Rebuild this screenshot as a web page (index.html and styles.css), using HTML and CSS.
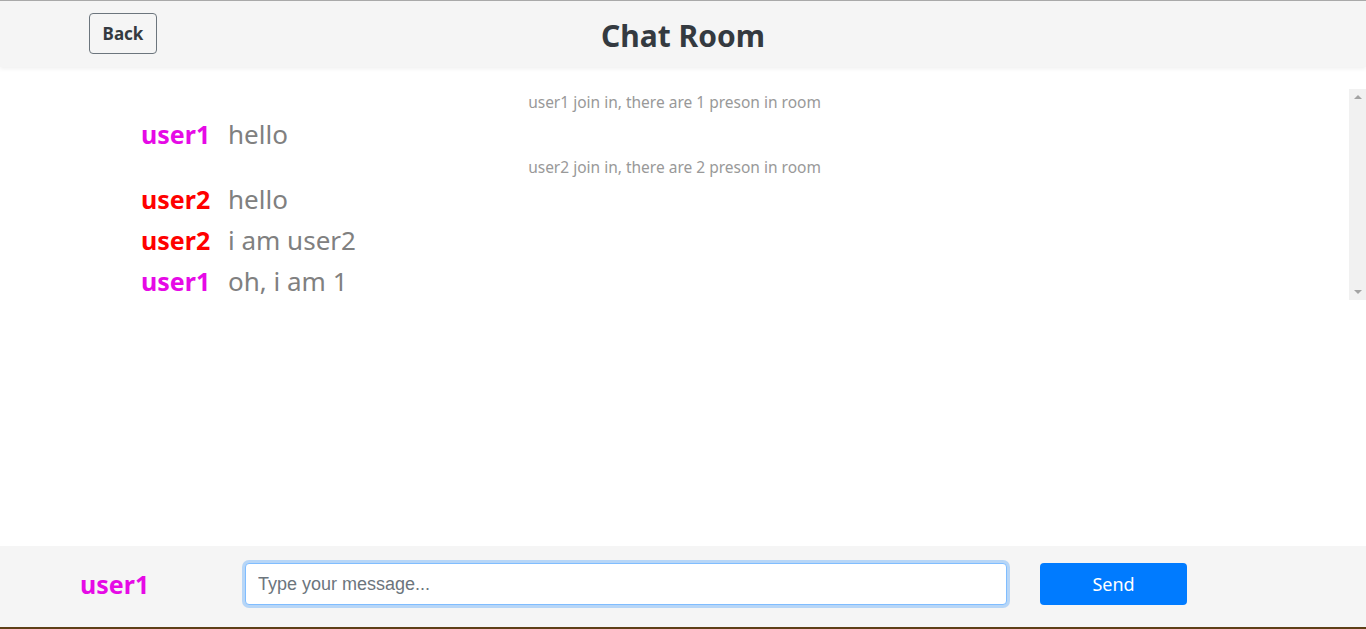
FILE: index.html
```html
<!DOCTYPE html>
<html lang="en">
<head>
    <meta charset="UTF-8">
    <meta name="viewport" content="width=device-width, initial-scale=1.0">
    <title>Chat Room</title>
    <link rel="stylesheet" href="styles.css">
</head>
<body>

<div class="page">
    <header class="top-bar">
        <div class="top-left">
            <button class="back-btn">Back</button>
        </div>
        <h1 class="room-title">Chat Room</h1>
        <div></div>
    </header>

    <main class="chat-area">
        <div class="chat-box">
            <div class="message-list">
                <p class="sys-msg">user1 join in, there are 1 preson in room</p>
                <div class="msg"><span class="msg-user user1">user1</span><span class="msg-text">hello</span></div>
                <p class="sys-msg">user2 join in, there are 2 preson in room</p>
                <div class="msg"><span class="msg-user user2">user2</span><span class="msg-text">hello</span></div>
                <div class="msg"><span class="msg-user user2">user2</span><span class="msg-text">i am user2</span></div>
                <div class="msg"><span class="msg-user user1">user1</span><span class="msg-text">oh, i am 1</span></div>
            </div>
            <!-- scrollbar track (content doesn't overflow yet) -->
            <div class="scroll-track">
                <span class="arrow-up"></span>
                <span class="arrow-down"></span>
            </div>
        </div>
    </main>

    <footer class="composer">
        <div class="me user1">user1</div>
        <input class="msg-input" type="text" placeholder="Type your message..." autofocus>
        <button class="send-btn">Send</button>
    </footer>
</div>

</body>
</html>
```

FILE: styles.css
```css
body {
    font-family: "Noto Sans", "Open Sans", sans-serif;
    margin: 0;
    padding: 0;
    background-color: #fff;
}

.page {
    height: 629px;
    display: flex;
    flex-direction: column;
    border-top: 1px solid #aaa;
    border-bottom: 2px solid #5e3f17;
    box-sizing: border-box;
}

.top-bar {
    display: grid;
    grid-template-columns: 1fr auto 1fr;
    align-items: center;
    height: 66px;
    flex-shrink: 0;
    background-color: #f5f5f5;
    box-shadow: 0 2px 4px rgba(0, 0, 0, 0.06);
    position: relative;
    z-index: 1;
}

.top-left {
    padding-left: 89px;
}

.back-btn {
    font-family: inherit;
    font-size: 17px;
    font-weight: bold;
    color: #343a40;
    background: transparent;
    border: 1px solid #6c757d;
    border-radius: 4px;
    width: 68px;
    height: 41px;
    padding: 0;
    margin-top: -1px;
}

.room-title {
    margin: 0;
    font-size: 30px;
    font-weight: bold;
    color: #343a40;
    padding-top: 2px;
}

.chat-area {
    flex: 1;
    padding-top: 22px;
}

.chat-box {
    display: flex;
    height: 211px;
}

.message-list {
    flex: 1;
    padding-left: 141px;
    padding-top: 1px;
}

.scroll-track {
    width: 17px;
    background-color: #f1f1f1;
    display: flex;
    flex-direction: column;
    justify-content: space-between;
    align-items: center;
    padding: 6px 0;
    box-sizing: border-box;
}

.arrow-up,
.arrow-down {
    width: 0;
    height: 0;
    border-left: 4px solid transparent;
    border-right: 4px solid transparent;
}

.arrow-up {
    border-bottom: 4px solid #a3a3a3;
}

.arrow-down {
    border-top: 4px solid #a3a3a3;
}

.sys-msg {
    margin: 0 0 0 -141px;
    height: 24px;
    line-height: 24px;
    text-align: center;
    font-size: 15.5px;
    color: #999;
}

.msg {
    display: flex;
    align-items: center;
    height: 41px;
    line-height: 41px;
}

.msg-user {
    font-size: 25px;
    font-weight: bold;
    width: 87px;
}

.user1 {
    color: #e60ae6;
}

.user2 {
    color: #ff0000;
}

.msg-text {
    font-size: 26px;
    color: #808080;
}

.composer {
    display: flex;
    align-items: flex-start;
    height: 81px;
    flex-shrink: 0;
    padding-top: 17px;
    box-sizing: border-box;
    background-color: #f5f5f5;
}

.me {
    width: 245px;
    box-sizing: border-box;
    padding-left: 80px;
    line-height: 42px;
    font-size: 25px;
    font-weight: bold;
}

.msg-input {
    width: 762px;
    height: 42px;
    box-sizing: border-box;
    padding: 0 12px;
    font-family: "Liberation Sans", Arial, sans-serif;
    font-size: 18px;
    color: #495057;
    background: #fff;
    border: 1px solid #80bdff;
    border-radius: 4px;
    box-shadow: 0 0 0 3px rgba(0, 123, 255, 0.25);
    outline: none;
}

.msg-input::placeholder {
    color: #6c757d;
}

.send-btn {
    margin-left: 33px;
    width: 147px;
    height: 42px;
    font-family: inherit;
    font-size: 18px;
    color: #fff;
    background-color: #007bff;
    border: none;
    border-radius: 4px;
}
```
